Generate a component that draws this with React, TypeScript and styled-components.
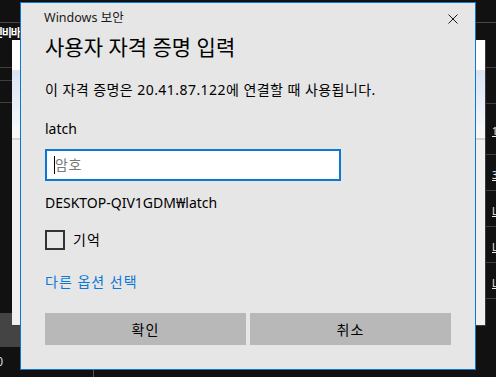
import styled, { createGlobalStyle } from "styled-components";

const GlobalStyle = createGlobalStyle`
  html, body {
    margin: 0;
    padding: 0;
    background: #111111;
    overflow: hidden;
  }
  body {
    font-family: "Segoe UI", "Noto Sans", "Noto Sans CJK KR", sans-serif;
  }
`;

const Desktop = styled.div`
  position: relative;
  width: 496px;
  height: 377px;
  overflow: hidden;
  background: #111111;
`;

/* dark app behind everything */
const AppShell = styled.div`
  display: flex;
  flex-direction: column;
  height: 100%;
`;

const AppHeader = styled.div`
  height: 23px;
  box-sizing: border-box;
  border-bottom: 1px solid #484848;
`;

const AppBody = styled.div`
  display: flex;
  height: 324px;
`;

const Sidebar = styled.div`
  width: 20px;
  flex-shrink: 0;
  display: flex;
  flex-direction: column;
`;

const SideTitle = styled.div`
  height: 45px;
  box-sizing: border-box;
  border-bottom: 1px solid #3e3e3e;
  display: flex;
  justify-content: flex-end;
  overflow: hidden;
  padding-top: 3px;
  color: #ffffff;
  font: 700 11px/12px "Noto Sans CJK KR", sans-serif;
  letter-spacing: -1px;
  white-space: nowrap;
`;

const SideItem = styled.div<{ $h: number }>`
  height: ${(p) => p.$h}px;
  box-sizing: border-box;
  border-bottom: 1px solid #3e3e3e;
`;

const SideSpacer = styled.div`
  flex: 1;
`;

const SideFooter = styled.div`
  height: 34px;
  background: #444444;
`;

const MainList = styled.div`
  flex: 1;
  display: flex;
  flex-direction: column;
`;

const ListRow = styled.div<{ $h: number }>`
  height: ${(p) => p.$h}px;
  box-sizing: border-box;
  border-bottom: 1px solid #3e3e3e;
  display: flex;
  justify-content: flex-end;
  align-items: center;
  padding-top: 4px;
`;

const RowValue = styled.span`
  width: 4px;
  overflow: hidden;
  white-space: nowrap;
  color: #eeeeee;
  font: 10px/12px "Noto Sans", sans-serif;
  text-decoration: underline;
`;

const AppFooter = styled.div`
  height: 30px;
  display: flex;
`;

const FooterItem = styled.div`
  width: 94px;
  box-sizing: border-box;
  border-right: 1px solid #555555;
  display: flex;
  align-items: center;
`;

const FooterClip = styled.span`
  width: 3px;
  overflow: hidden;
  display: flex;
  justify-content: flex-end;
  white-space: nowrap;
  color: #dddddd;
  font: 12px/14px "Noto Sans", sans-serif;
`;

/* light window behind the dialog */
const BackWindow = styled.div`
  position: absolute;
  left: 12px;
  top: 40px;
  width: 474px;
  height: 286px;
  box-sizing: border-box;
  border-right: 1px solid #3a3a3a;
  border-bottom: 1px solid #3a3a3a;
  background: #f0f0f0;
  display: flex;
  flex-direction: column;
`;

const BackHead = styled.div`
  height: 30px;
  background: #ffffff;
`;

const BackBanner = styled.div`
  height: 58px;
  background: linear-gradient(#dae4f2, #f4f7fb);
`;

const BackBannerFoot = styled.div`
  height: 10px;
  background: #f7f7f7;
  border-bottom: 2px solid #d4d4d4;
`;

/* credential dialog */
const Dialog = styled.div`
  position: absolute;
  left: 20px;
  top: 2px;
  width: 456px;
  height: 368px;
  box-sizing: border-box;
  border: 1px solid #0a78d7;
  background: #e6e6e6;
  display: flex;
  flex-direction: column;
  color: #000000;
`;

const TitleBar = styled.div`
  height: 30px;
  box-sizing: border-box;
  display: flex;
  justify-content: space-between;
  align-items: flex-start;
  padding: 7px 17px 0 23px;
`;

const TitleText = styled.span`
  font-size: 12.5px;
  line-height: 16px;
  color: #1a1a1a;
`;

const CloseButton = styled.button`
  margin-top: 4px;
  padding: 0;
  border: none;
  background: none;
  width: 10px;
  height: 10px;
  display: flex;
`;

const DialogBody = styled.div`
  flex: 1;
  display: flex;
  flex-direction: column;
  padding: 0 24px 24px;
`;

const Heading = styled.h1`
  margin: 0;
  font-size: 21px;
  font-weight: 400;
  line-height: 28px;
`;

const Text = styled.p<{ $mt: number; $ls?: number }>`
  margin: ${(p) => p.$mt}px 0 0;
  font-size: 14px;
  line-height: 20px;
  letter-spacing: ${(p) => p.$ls ?? 0}px;
`;

const PasswordField = styled.div`
  margin-top: 10px;
  width: 296px;
  height: 32px;
  box-sizing: border-box;
  border: 2px solid #0a78d7;
  background: #ffffff;
  display: flex;
  align-items: center;
  padding-left: 7px;
`;

const Caret = styled.span`
  width: 1px;
  height: 18px;
  background: #000000;
`;

const Placeholder = styled.span`
  font-size: 14px;
  line-height: 20px;
  color: #7a7a7a;
  letter-spacing: 0.5px;
`;

const CheckRow = styled.label`
  margin-top: 17px;
  height: 20px;
  display: flex;
  align-items: center;
  gap: 8px;
  font-size: 14px;
  line-height: 20px;
  letter-spacing: 1px;
`;

const CheckBox = styled.span`
  width: 20px;
  height: 20px;
  box-sizing: border-box;
  border: 2px solid #333333;
`;

const Link = styled.a`
  margin-top: 22px;
  font-size: 14px;
  line-height: 20px;
  color: #0a78d7;
  letter-spacing: 1px;
  text-decoration: none;
`;

const ButtonRow = styled.div`
  margin-top: 21px;
  display: grid;
  grid-template-columns: 1fr 1fr;
  gap: 4px;
`;

const Button = styled.button`
  height: 32px;
  border: none;
  background: #b8b8b8;
  font-family: inherit;
  font-size: 14px;
  letter-spacing: 1px;
  color: #000000;
  padding: 0;
`;

const sideRows = [13, 22];
const listRows = [
  { h: 36, v: "" },
  { h: 51, v: "1,024" },
  { h: 36, v: "3,072" },
  { h: 36, v: "L" },
  { h: 36, v: "L" },
  { h: 36, v: "L" },
];

function App() {
  return (
    <Desktop>
      <GlobalStyle />
      <AppShell>
        <AppHeader />
        <AppBody>
          <Sidebar>
            <SideTitle>인비바</SideTitle>
            {sideRows.map((h, i) => (
              <SideItem key={i} $h={h} />
            ))}
            <SideSpacer />
            <SideFooter />
          </Sidebar>
          <MainList>
            <SideItem $h={45} />
            {listRows.map((r, i) => (
              <ListRow key={i} $h={r.h}>
                <RowValue>{r.v}</RowValue>
              </ListRow>
            ))}
          </MainList>
        </AppBody>
        <AppFooter>
          <FooterItem>
            <FooterClip>10</FooterClip>
          </FooterItem>
        </AppFooter>
      </AppShell>

      <BackWindow>
        <BackHead />
        <BackBanner />
        <BackBannerFoot />
      </BackWindow>

      <Dialog>
        <TitleBar>
          <TitleText>Windows 보안</TitleText>
          <CloseButton aria-label="닫기">
            <svg width="10" height="10" viewBox="0 0 10 10">
              <path
                d="M0.5 0.5 L9.5 9.5 M9.5 0.5 L0.5 9.5"
                stroke="#1a1a1a"
                strokeWidth="1"
                fill="none"
              />
            </svg>
          </CloseButton>
        </TitleBar>
        <DialogBody>
          <Heading>사용자 자격 증명 입력</Heading>
          <Text $mt={19} $ls={0.45}>
            이 자격 증명은 20.41.87.122에 연결할 때 사용됩니다.
          </Text>
          <Text $mt={19}>latch</Text>
          <PasswordField>
            <Caret />
            <Placeholder>암호</Placeholder>
          </PasswordField>
          <Text $mt={12}>DESKTOP-QIV1GDM₩latch</Text>
          <CheckRow>
            <CheckBox />
            기억
          </CheckRow>
          <Link href="#">다른 옵션 선택</Link>
          <ButtonRow>
            <Button>확인</Button>
            <Button>취소</Button>
          </ButtonRow>
        </DialogBody>
      </Dialog>
    </Desktop>
  );
}

export default App;
